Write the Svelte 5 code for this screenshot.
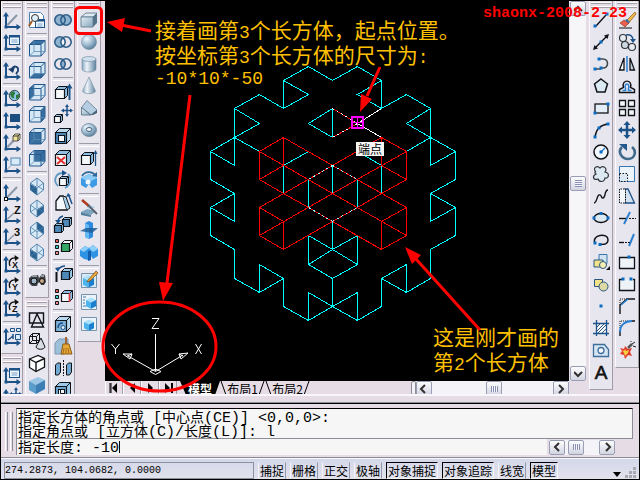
<script>
  const NAVY = '#1d5288';
  const INK = '#101418';

  // ---- icon building blocks (20 x 20 box) ----
  const axes =
    `<path d="M4 4v13h13" fill="none" stroke="${NAVY}" stroke-width="2"/>` +
    `<path d="M1 6.5 4 2l3 4.5zM14.500 14l4.500 3-4.500 3z" fill="${NAVY}"/>` +
    `<rect x="2.500" y="15.500" width="3" height="3" fill="${NAVY}"/>`;
  const diagonal = `<path d="M5.500 15 15 5" stroke="#8a97a8" stroke-width="2"/>`;
  const winBox = (x, y, w, h) =>
    `<rect x="${x}" y="${y}" width="${w}" height="${h}" fill="#eef6fd" stroke="${NAVY}"/>` +
    `<path d="M${x} ${y + 1}h${w}" stroke="${NAVY}" stroke-width="2"/>` +
    `<path d="M${x + 2} ${y + 4.5}h${w - 4}M${x + 2} ${y + 6.5}h${w - 4}" stroke="#7aa3c8"/>`;
  const letter = (c) =>
    `<text x="12" y="10" font-family="Liberation Sans, sans-serif" font-weight="700" font-size="11" fill="#111">${c}</text>`;
  const turn = (c) =>
    `<path d="M8 12C6 7 9 3 14 4" fill="none" stroke="#111" stroke-width="1.300"/><path d="M12.500 1 17 4l-4 3z" fill="#111"/>` +
    `<text x="10" y="14" font-family="Liberation Sans, sans-serif" font-weight="700" font-size="9" fill="#111">${c}</text>`;

  const faces = {
    top: 'M2.500 6.500 7 2.500h11l-4 4z',
    bottom: 'M2.500 18 7 13.500h11L14 18z',
    left: 'M2.500 6.500 7 2.500v11L2.500 18z',
    right: 'M14 6.500l4-4v11L14 18z',
    front: 'M2.500 6.500H14V18H2.500z',
    back: 'M7 2.500h11v11H7z'
  };
  const viewCube = (face) =>
    `<path d="M2.500 6.500 7 2.500h11v11L14 18H2.500z" fill="#d5e8f6"/>` +
    `<path d="${faces[face]}" fill="#39709f"/>` +
    `<path d="M2.500 6.500 7 2.500h11v11L14 18H2.500zM2.500 6.500H14V18M14 6.500l4-4" fill="none" stroke="#24588c"/>` +
    `<path d="M7 2.500v11h11M7 13.500 2.500 18" fill="none" stroke="#5d8bb2" stroke-width=".8"/>`;

  const isoFaces = {
    sw: 'M3.500 8v6l6.500 5v-7z',
    se: 'M16.500 8v6L10 19v-7z',
    ne: 'M10 2l6.500 5v7L10 9z',
    nw: 'M10 11v7l-6.500-4V8z'
  };
  const isoCube = (dir) =>
    `<path d="M10 2 16.500 7v7L10 19 3.500 14V7z" fill="#d7e9f6" stroke="#5685ad"/>` +
    `<path d="${isoFaces[dir]}" fill="#2a6291"/>` +
    `<path d="M3.500 7 10 12l6.500-5M10 12v7M3.500 14 10 9.500l6.500 4.500M10 2v7" fill="none" stroke="#4f80aa" stroke-width=".8"/>`;

  const rings = (fill) =>
    `${fill}<circle cx="7" cy="10" r="5.200" fill="none" stroke="#2e5d86" stroke-width="1.600"/>` +
    `<circle cx="13" cy="10" r="5.200" fill="none" stroke="#2e5d86" stroke-width="1.600"/>`;
  const lens = (c) => `<path d="M10 5.700a5.200 5.200 0 0 1 0 8.600 5.200 5.200 0 0 1 0-8.600z" fill="${c}"/>`;

  const solid = (x, y, s, front = '#f5f8fb', side = '#8fc0e4') => {
    const d = Math.round(s / 3);
    return (
      `<path d="M${x} ${y}l${d} ${-d}h${s}v${s}l${-d} ${d}z" fill="${side}" stroke="${INK}"/>` +
      `<path d="M${x} ${y}h${s}v${s}h${-s}z" fill="${front}" stroke="${INK}" stroke-width="1.200"/>` +
      `<path d="M${x + s} ${y}l${d} ${-d}" stroke="${INK}"/>`
    );
  };
  const blueBox = (x, y, s) => {
    const d = s / 2;
    return (
      `<path d="M${x} ${y}l${d} ${-d / 2} ${d} ${d / 2}-${d} ${d / 2}z" fill="#a9e0fb"/>` +
      `<path d="M${x} ${y}l${d} ${d / 2}v${s * 0.62}l-${d}-${d / 2}z" fill="#4db4ee"/>` +
      `<path d="M${x + s} ${y}l-${d} ${d / 2}v${s * 0.62}l${d}-${d / 2}z" fill="#1b7fd0"/>`
    );
  };
  const rgb =
    `<path d="M2.500 3.500h3v3h-3z" fill="#e45b4f" stroke="${INK}"/><path d="M2.500 9.500h3v3h-3z" fill="#3bd0c0" stroke="${INK}"/>` +
    `<path d="M2.500 15.500h3v3h-3z" fill="#f09090" stroke="${INK}"/>`;
  const knob = (x, y) => `<rect x="${x - 1.5}" y="${y - 1.5}" width="3" height="3" fill="#0b6cc4"/>`;
  const thin = (d, extra = '') => `<path d="${d}" fill="none" stroke="${INK}" ${extra || 'stroke-width="1.400"'}/>`;
  const blue = (d, width = 1.5) => `<path d="${d}" fill="none" stroke="#2a7fd0" stroke-width="${width}"/>`;

  const icons = {
    ucs: axes + diagonal,
    ucsNamed: axes + winBox(7.5, 3.5, 10, 9),
    ucsPrev: axes + `<path d="M10 9c1-4 7-3 6 2l-2 3" fill="none" stroke="#1a3f6c" stroke-width="1.800"/><path d="M6 9l7-2-2 6z" fill="#1a3f6c"/>`,
    ucsWorld: axes + `<circle cx="12.500" cy="7.500" r="5.200" fill="#8cc4e8" stroke="#3c4a50"/><path d="M8 6c2-4 5-3 5-1s-2 2-1 4-3 2-4-3zM14 7l3-1c1 3-1 5-3 5z" fill="#2c7a3c"/>`,
    ucsObject: axes + `<rect x="8" y="4" width="10" height="8" fill="#1c4d80"/>`,
    ucsFace: axes + diagonal + `<path d="M11 4l2-2h5v5l-2 2h-5z" fill="#efe39a" stroke="#555"/><path d="M16 4v5M11 4h5l2-2" stroke="#333" fill="none"/>`,
    ucsView: axes + `<rect x="9" y="4" width="9" height="7" fill="#d8ebf8" stroke="#4d84b4"/><path d="M5.500 15l3-3" stroke="#8a97a8"/>`,
    ucsOrigin: axes + diagonal + `<rect x="2.500" y="15.500" width="3" height="3" fill="#fff" stroke="#111"/>`,
    ucsZ: axes + `<path d="M5.500 15 12 9" stroke="#8a97a8" stroke-width="1.500"/>` + letter('Z'),
    ucs3: axes + `<path d="M5.500 15 12 9" stroke="#8a97a8" stroke-width="1.500"/>` + letter('3'),
    rotX: axes + turn('X'),
    rotY: axes + turn('Y'),
    rotZ: axes + turn('Z'),
    ucsApply: axes + `<path d="M8.500 2.500h4v3h-4zM14.500 2.500h4v3h-4zM13.500 8.500h5v5h-5z" fill="#dcebf8" stroke="${NAVY}"/><path d="M6 14l5-4M11 8v5" stroke="${NAVY}" stroke-width="1.500"/>`,
    ucsMove: axes + `<path d="M14 2v10M9 7h10" stroke="${NAVY}" stroke-width="1.500"/><path d="M14 0l2 3h-4zM14 14l2-3h-4zM7 7l3-2v4zM20 7l-3-2v4z" fill="${NAVY}"/>`,

    namedViews: `<path d="M2.500 2.500h11l3 3v12h-14z" fill="#fff" stroke="#4d84b4"/>` + winBox(8.5, 9.5, 9, 8) + `<circle cx="8" cy="8" r="3.500" fill="#dff0fb" stroke="#333"/><path d="M5 11l-3 5" stroke="#a05a20" stroke-width="2"/>`,
    vTop: viewCube('top'), vBottom: viewCube('bottom'), vLeft: viewCube('left'),
    vRight: viewCube('right'), vFront: viewCube('front'), vBack: viewCube('back'),
    sw: isoCube('sw'), se: isoCube('se'), ne: isoCube('ne'), nw: isoCube('nw'),
    camera: `<path d="M2 8l4-3h5l1 3 3-4 3 1 1 7-2 3h-3l-1-3-2 1-1 3H5l-3-3z" fill="#3c4248"/><circle cx="7" cy="11" r="3" fill="#9fb4c4" stroke="#111"/><circle cx="15" cy="11" r="2.500" fill="#c8a888" stroke="#111"/><path d="M5 6h5M14 6h3" stroke="#e8eef2"/>`,
    wire2d: thin('M2.500 4h14v10h-14zM10 5 4.500 18h12z'),
    wire3d: thin('M2.500 5.500l3-3h7v7l-3 3h-7zM2.500 5.500h7v7M9.500 5.500l3-3M5.500 2.500v7h7M5.500 9.500l-3 3', 'stroke-width="1"') + `<path d="M14 7l4 9c-1 3-8 3-9 0z" fill="#d8dde4" stroke="${INK}"/>`,
    hidden: `<path d="M2.500 6 11 2.500l6.500 3V14L9 18.500l-6.500-4z" fill="#fdfdfd" stroke="${INK}" stroke-width="1.300"/>` + thin('M2.500 6 9 9.500 17.500 5.500M9 9.500v9'),
    flat: `<path d="M2 6l9-4 7 3-9 5z" fill="#9cc6e6"/><path d="M2 6l7 4v9l-7-4z" fill="#5c9ccb"/><path d="M9 10l9-5v9l-9 5z" fill="#3d7fb4"/>`,

    union: rings('<circle cx="7" cy="10" r="5" fill="#8db3d0"/><circle cx="13" cy="10" r="5" fill="#8db3d0"/>' + lens('#8db3d0')),
    subtract: rings('<circle cx="7" cy="10" r="5" fill="#8db3d0"/>' + lens('#f3f6fa')),
    intersect: rings(lens('#8db3d0')),
    extrudeFace: solid(2.5, 7.5, 9) + `<path d="M16.500 5v13" stroke="${NAVY}" stroke-width="2"/><path d="M13.500 6.500l3-5 3 5z" fill="${NAVY}"/>`,
    moveFace: solid(1.500, 12.500, 6) + `<path d="M14 2v9M9.500 6.500h9" stroke="${NAVY}" stroke-width="1.500"/><path d="M14 0l2 3h-4zM14 13l2-3h-4zM8 6.500l3-2v4zM20 6.500l-3-2v4z" fill="${NAVY}"/>`,
    offsetFace: solid(2.5, 6.500, 11, '#4d88b8', '#b8d8ee') + `<rect x="5.500" y="9.500" width="6" height="6" fill="#f2f6fa" stroke="${INK}"/>`,
    deleteFace: solid(2.5, 6.500, 11) + `<path d="M4 9l8 7M12 9l-8 7" stroke="#e03030" stroke-width="2"/>`,
    rotateFace: solid(6.500, 8.500, 7) + `<path d="M5 16C0 11 2 3 10 3M15 4c4 4 3 11-3 14" fill="none" stroke="#5f9ac6" stroke-width="1.800"/><path d="M9 0l5 3-5 3z" fill="${NAVY}"/>`,
    taperFace: `<path d="M3 9l4-5h3l4 14H3z" fill="#f5f8fb" stroke="${INK}" stroke-width="1.300"/><path d="M10 4l3 1 4 11-3 2" fill="#a6cde8" stroke="${INK}"/><path d="M19 12l-3-8" stroke="${NAVY}" stroke-width="1.500"/><path d="M13 5l2-4 3 3z" fill="${NAVY}"/>`,
    copyFace: solid(9.500, 5.500, 7, '#4d88b8') + solid(1.500, 11.500, 7, '#4d88b8') + `<path d="M5 8c0-4 2-5 5-6" fill="none" stroke="${NAVY}" stroke-width="1.500"/><path d="M2 6h6l-3 4z" fill="${NAVY}"/>`,
    colorFace: rgb + solid(8.500, 7.500, 8, '#35a865', '#f4f6f8'),
    copyEdge: solid(8.500, 7.500, 8, '#4d88b8', '#9ccaea') + `<path d="M3.500 8v10" stroke="${INK}" stroke-width="2"/><path d="M5 6c2-3 4-4 7-4" fill="none" stroke="${NAVY}" stroke-width="1.500"/><path d="M2 4l5-1-2 5z" fill="${NAVY}"/>`,
    colorEdge: rgb + solid(8.500, 7.500, 8) + `<path d="M16.500 7v9" stroke="#e23838" stroke-width="1.500"/>`,
    imprint: solid(2.5, 6.500, 11, '#7fb2d8', '#b8d8ee') + `<path d="M5 14c0-3 2-5 5-5" fill="none" stroke="${NAVY}" stroke-width="1.500"/><circle cx="10" cy="13.500" r="2" fill="#e8f2fa" stroke="${NAVY}"/>`,
    clean: `<path d="M2 7l4-4h9v10l-4 5H2z" fill="#9cc0da" stroke="#7c98b0"/><path d="M13 1v8" stroke="#a8642c" stroke-width="2"/><path d="M10 8h6l3 10H8z" fill="#e8a838" stroke="#8a5a14"/><path d="M11 12l-1 6M13 12v6M15 12l1 6" stroke="#a8701c"/>`,
    separate: `<path d="M2.500 7l2-2h3v9l-2 3h-3zM13.500 7l2-2h3v9l-2 3h-3z" fill="#72a9d2" stroke="${INK}"/><path d="M10.500 2v16" stroke="${INK}" stroke-dasharray="2 1"/>`,
    shell: solid(2.5, 6.500, 11, '#6fa6cf', '#9ccaea') + `<rect x="5.500" y="9.500" width="6" height="6" fill="#f2f6fa" stroke="${INK}"/><path d="M5.500 15.500l2-2h4M7.500 13.500v-4" fill="none" stroke="${INK}"/>`,

    box: `<path d="M2 7l5-4h11l-4 4z" fill="#dfeaf2" stroke="#6d8798"/><path d="M2 7h12v10H2z" fill="url(#steel)" stroke="#6d8798"/><path d="M14 7l4-4v10l-4 4z" fill="#54738a"/>`,
    sphere: `<circle cx="10" cy="10" r="7.500" fill="url(#ball)" stroke="#6c8aa2" stroke-width=".6"/>`,
    cylinder: `<path d="M3 5v10c0 4 14 4 14 0V5z" fill="url(#tube)" stroke="#7189a0" stroke-width=".6"/><ellipse cx="10" cy="5" rx="7" ry="2.500" fill="#cfe0ec" stroke="#7189a0" stroke-width=".6"/>`,
    cone: `<path d="M10 1l6.500 14c-1 3.500-12 3.500-13 0z" fill="url(#tube)" stroke="#7189a0" stroke-width=".6"/>`,
    wedge: `<path d="M2.500 9.500 8 2.500 18 12l-6 5z" fill="#b4cde0" stroke="#5f7b92" stroke-width=".8"/><path d="M2.500 9.500 12 17H2.500z" fill="url(#steel)" stroke="#4f6b82" stroke-width=".8"/><path d="M12 17l6-5v3l-4 2z" fill="#3f5c74"/>`,
    torus: `<ellipse cx="10" cy="10" rx="7.500" ry="6.500" fill="url(#ball)" stroke="#607c92" stroke-width=".7"/><ellipse cx="10" cy="9.500" rx="2.800" ry="2" fill="#edf1f6" stroke="#3f6280"/>`,
    extrude: solid(2.5, 7.500, 9) + `<path d="M16.500 5v13" stroke="${NAVY}" stroke-width="1.300"/><path d="M14.500 6l2-4 2 4z" fill="${NAVY}"/>`,
    revolve: `<path d="M2 8l8-4 8 4v7l-5 3-3-4-3 4-5-3z" fill="#3d9be6"/><path d="M2 8l8-4 8 4-8 4z" fill="#8cccf6"/><circle cx="9" cy="12" r="2.500" fill="#f0f6fc"/><path d="M3 6c3-5 10-5 13-1" fill="none" stroke="#2d6a9c" stroke-width="1.600"/><path d="M18 2v5l-5-1z" fill="#2d6a9c"/>`,
    slice: `<path d="M2 14l6-3 9 2-5 4z" fill="#7ea4c0"/><path d="M2 14l10 3v2L2 17z" fill="#55809f"/><path d="M7 9l4-2 5 2-4 3z" fill="#b4cedf"/><path d="M3 2l7 6" stroke="#b03a20" stroke-width="2.500"/><path d="M9 7l9 9" stroke="#56606a" stroke-width="1.800"/>`,
    section: `<path d="M6 3l4-2 4 2v14l-4 2-4-2z" fill="#2d8ade"/><path d="M6 3l4 2v14l-4-2z" fill="#66b8f2"/><path d="M1 11l6-3h12l-6 5z" fill="#1c5f9c" opacity=".85"/>`,
    interfere: `<path d="M1 8l5-4 4 2 4-3 5 4v7l-5 3-2-3v-3l-3 1v6l-4-1-4-3z" fill="#2f93e4"/><path d="M1 8l5-4 4 2-5 4zM10 6l4-3 5 4-5 3z" fill="#8ed0f8"/><path d="M9 9h3v9l-3 1z" fill="#135fae"/>`,
    setDraw: `<path d="M2.500 3.500h15v14h-15z" fill="#d8e8f4" stroke="#7894ac"/>` + blueBox(4, 8, 11) + `<path d="M9 10 17 1l2 2-8 8-3 1z" fill="#e6a43a" stroke="#7a4a14" stroke-width=".7"/>`,
    setView: `<path d="M2.500 2.500h15v15h-15z" fill="#eaf3fa" stroke="#7894ac"/><path d="M4 5h3M4 8h2M4 11h2M4 14h3" stroke="#52779a"/>` + blueBox(7, 8, 10),
    setProf: `<path d="M2.500 3.500h15v13h-15z" fill="#eaf3fa" stroke="#7894ac"/>` + blueBox(5, 8, 10),

    line: thin('M5 16 15 5') + knob(4, 16) + knob(16, 4),
    xline: thin('M4 16 16 4') + `<path d="M2 18l1.500-5 3.500 3.500zM18 2l-1.500 5L13 3.500z" fill="${INK}"/>` + knob(10, 10),
    pline: `<path d="M4 15h6M8 5h4c6 0 6 9 0 9h-2" fill="none" stroke="#404850" stroke-width="1.600"/>` + knob(4, 15) + knob(10, 14) + knob(8, 5),
    polygon: `<path d="M10 3l6.500 5L14 16H6L3.500 8z" fill="#dbe9f3" stroke="${INK}" stroke-width="1.500"/>`,
    rect: `<rect x="4" y="6" width="13" height="9" fill="#e4eef6" stroke="${INK}" stroke-width="1.300"/>` + knob(4, 15) + knob(17, 6),
    arc: thin('M4 17C5 9 9 5 17 4') + knob(4, 17) + knob(8, 8) + knob(17, 4),
    circle: `<circle cx="10" cy="10" r="7" fill="#f3f7fb" stroke="${INK}" stroke-width="1.500"/>` + blue('M10 10l4-4') + knob(10, 10),
    cloud: `<path d="M5 8C1 4 6 1 9 4c3-3 8 0 5 4 5 1 4 7 0 6-1 5-6 4-7 1-5 2-6-3-2-5-2-1-1-3 0-2z" fill="#dce8f2" stroke="#30363c" stroke-width="1.200"/>`,
    spline: thin('M3 17c3 0 3-8 5-8 3-1 2 4 4 3 3 0 1-8 5-8'),
    ellipse: `<ellipse cx="10" cy="10" rx="7" ry="4.500" fill="#dce8f2" stroke="${INK}" stroke-width="1.400"/>` + knob(3, 10) + knob(17, 10) + knob(10, 5.5),
    earc: thin('M4 13C0 5 17 2 17 10c0 4-4 5-8 4') + knob(4, 13) + knob(9, 14.500),
    insert: `<path d="M8 2.500h8v9h-8z" fill="#cfe3f4" stroke="#3a76ac"/><path d="M3 8h9v7H3z" fill="#f2e28a" stroke="#2a5580"/><circle cx="12" cy="13" r="3.500" fill="#f6efb0" stroke="#2a5580"/><path d="M15 18l4-4v4z" fill="#111"/>`,
    block: `<path d="M3.500 5.500h8v7h-8z" fill="#f2e28a" stroke="#2a5580"/><circle cx="12.500" cy="12.500" r="4.500" fill="#ddd9a4" stroke="#2a5580"/>`,
    point: knob(10, 10),
    hatch: `<path d="M6 6h9v9H6z" fill="#f6f8fb"/><path d="M6 9l3-3M6 13l7-7M7 15l8-8M11 15l4-4" stroke="#2a5580"/>` + `<path d="M2 5.500h16M2 15.500h16M5.500 2v16M15.500 2v16" stroke="${NAVY}" stroke-width="1.300"/>`,
    region: `<path d="M2.500 4.500h11l4 5v7h-15z" fill="#d5e5f2" stroke="#3e6f9c" stroke-width="1.300"/><circle cx="10" cy="10.500" r="3" fill="#f6f8fb" stroke="#3e6f9c" stroke-width="1.300"/>`,
    text: `<text x="10" y="17" text-anchor="middle" font-family="Liberation Sans, sans-serif" font-size="19" fill="#111" stroke="#111" stroke-width=".6">A</text>`,

    erase: `<path d="M18 2 8 12l3 2L19 4z" fill="#f0b848" stroke="#8a5a14" stroke-width=".7"/><path d="M3 13l4-3 5 3-4 4z" fill="#e8604c" stroke="#8a2a1c" stroke-width=".6"/><path d="M8 10l2-1 3 3-2 1z" fill="#2f6cac"/><path d="M2 18h13" stroke="#111"/>`,
    copy: `<circle cx="6" cy="6" r="3.500" fill="#e6ebf0" stroke="#30363c" stroke-width="1.200"/><circle cx="8" cy="13" r="3.500" fill="#cdd8e2" stroke="#30363c" stroke-width="1.200"/><circle cx="15" cy="15" r="3.500" fill="#e6ebf0" stroke="#30363c" stroke-width="1.200"/><path d="M9 3c5-1 7 2 7 5" fill="none" stroke="${NAVY}" stroke-width="1.500"/><path d="M13 7h6l-3 4z" fill="${NAVY}"/>`,
    mirror: `<path d="M7 4v12H2.500z" fill="#fff" stroke="${INK}" stroke-width="1.300"/><path d="M13 4v12h4.500z" fill="#c8d6e2" stroke="${INK}" stroke-width="1.300"/>` + blue('M10 2v16'),
    offset: thin('M2.500 16.500v-3l4-2C4 3 16 3 13.500 11.500l4 2v3z') + blue('M5.500 14.500h3v-2c-2-6 5-6 3 0v2h3'),
    array: `<path d="M2.500 2.500h6v6h-6zM11.500 2.500h6v6h-6zM2.500 11.500h6v6h-6zM11.500 11.500h6v6h-6z" fill="#f4f7fa" stroke="${INK}" stroke-width="1.300"/>`,
    move: `<path d="M10 3v14M3 10h14" stroke="${NAVY}" stroke-width="2.500"/><path d="M10 1l3.500 4h-7zM10 19l3.500-4h-7zM1 10l4-3.500v7zM19 10l-4-3.500v7z" fill="${NAVY}"/>`,
    rotate: `<path d="M5 5c-5 5 0 12 6 12 7 0 9-8 4-12" fill="none" stroke="#406a8c" stroke-width="2.600"/><path d="M2 2h8v7z" fill="#24588c"/>`,
    scale: `<path d="M2.500 2.500h15v15h-15z" fill="#eef5fa" stroke="#3477b4"/><path d="M2.500 9.500h8v8h-8z" fill="#dce8f2" stroke="${INK}" stroke-dasharray="1.500 1.500"/>`,
    stretch: `<path d="M8 3h3l6.500 14H8z" fill="#d2e2ef" stroke="#1d4f86" stroke-width="1.300"/><path d="M2.500 3v14h6V3z" fill="#f4f7fa" stroke="${INK}" stroke-dasharray="1.500 1"/>`,
    trim: blue('M7 16l6-12', 2) + thin('M2 10.500h7') + thin('M12 10.500h7', 'stroke-dasharray="2 1"'),
    extend: blue('M12 16l5-12', 2) + thin('M2 12.500h5') + thin('M8 12.500h6', 'stroke-dasharray="2 1"'),
    breakPt: `<path d="M2.500 5.500h15v11h-15z" fill="#eef3f8" stroke="${INK}" stroke-width="1.300"/>` + knob(12, 5),
    break: `<path d="M5 5.500H2.500v11h15v-11H16" fill="#eef3f8" stroke="${INK}" stroke-width="1.300"/>` + knob(6, 5) + knob(14, 5),
    chamfer: thin('M3 18v-9l7-6h8') + thin('M3 9V3h7', 'stroke-dasharray="1 1"') + blue('M4 9l7-6'),
    fillet: thin('M3 18v-6M14 3h4') + thin('M3 10V3h9', 'stroke-dasharray="1 1"') + `<path d="M3 14C3 7 8 3 15 3" fill="none" stroke="#2a7fd0" stroke-width="2"/>`,
    explode: `<path d="M3 8l4 1 1-3 3 3 4-1-2 4 2 4-4-1-3 4-1-4-4-1 2-3z" fill="#e03a2a"/><path d="M5 10l2 1 1-2 1 2 3-1-1 3-3 3-1-3z" fill="#f8d040"/><path d="M11 8l4-4" stroke="#555" stroke-width="2.500"/><path d="M15 4l3-2M16 6l3 1M14 2V1" stroke="#222"/>`
  };

  const sep = '|';
  const leftDock = [
    [
      ['ucs', 'ucsNamed', sep, 'ucsPrev', sep, 'ucsWorld', 'ucsObject', 'ucsFace', 'ucsView', sep, 'ucsOrigin', 'ucsZ', 'ucs3', sep, 'rotX', 'rotY', 'rotZ', sep, 'ucsApply'],
      ['ucsNamed', 'ucsMove']
    ],
    [
      ['namedViews', sep, 'vTop', 'vBottom', 'vLeft', 'vRight', 'vFront', 'vBack', sep, 'sw', 'se', 'ne', 'nw', sep, 'camera'],
      ['wire2d', 'wire3d', 'hidden', 'flat']
    ],
    [
      ['union', 'subtract', 'intersect', sep, 'extrudeFace', 'moveFace', 'offsetFace', 'deleteFace', 'rotateFace', 'taperFace', 'copyFace', 'colorFace', sep, 'copyEdge', 'colorEdge', sep, 'imprint', 'clean', 'separate', 'shell']
    ],
    [
      ['box', 'sphere', 'cylinder', 'cone', 'wedge', 'torus', sep, 'extrude', 'revolve', sep, 'slice', 'section', 'interfere', sep, 'setDraw', 'setView', 'setProf']
    ]
  ];
  const rightDock = [
    [['line', 'xline', 'pline', 'polygon', 'rect', 'arc', 'circle', 'cloud', 'spline', 'ellipse', 'earc', 'insert', 'block', 'point', 'hatch', 'region', 'text']],
    [['erase', 'copy', 'mirror', 'offset', 'array', 'move', 'rotate', 'scale', 'stretch', 'trim', 'extend', 'breakPt', 'break', 'chamfer', 'fillet', 'explode']]
  ];

  // ---- isometric model: i counts half cells across, j half cells down ----
  const at = ([i, j]) => `${Math.round(332 + 24.5 * i) + 0.5} ${Math.round(193 + 14.1 * j) + 0.5}`;
  const toPath = (runs) => runs.map((r) => 'M' + r.map(at).join('L')).join('');
  const both = (runs) => toPath([...runs, ...runs.map((r) => r.map(([i, j]) => [-i, j]))]);

  const cyan = both([
    [[0, -8], [-1, -9], [-2, -8], [-2, -6], [-3, -7], [-4, -6], [-4, -2], [-5, -3], [-5, -1], [-4, 0], [-4, 2], [-5, 1], [-5, 3], [-4, 4], [-4, 6], [-3, 7], [-2, 6], [-2, 8], [-1, 9], [0, 8], [0, 6], [-1, 5], [-1, 3], [0, 4], [0, 2]],
    [[-2, -8], [-1, -7], [-2, -6]],
    [[-4, -6], [-3, -5], [-4, -4]],
    [[-5, -3], [-4, -4], [-3, -3]],
    [[-4, 0], [-5, 1]],
    [[-3, 7], [-3, 5], [-2, 6]],
    [[-1, 9], [-1, 7], [0, 8]],
    [[-1, 5], [0, 4]],
    [[-1, -3], [-2, -2], [-2, 0]],
    [[-1, -1], [-1, 1]],
    [[0, -2], [0, 0]]
  ]);
  const cyanLeft = toPath([[[0, -4], [0, -6], [-1, -5], [0, -4]]]);
  const red = both([
    [[0, 0], [-3, -3], [-2, -4], [0, -2], [-3, 1], [-3, 3], [-2, 4], [0, 2]],
    [[-3, -3], [-3, -1], [-2, -2], [-2, -4]],
    [[-3, -1], [-2, 0], [-1, 1], [0, 2]],
    [[0, 0], [-3, 3]],
    [[-3, 1], [-2, 2], [-2, 4]]
  ]);
  const dotted = both([[[0, -2], [-1, -1]], [[0, 2], [-1, 1]]]);
  const snapRed = toPath([[[0, -6], [1, -5], [0, -4]]]);
  const snapWhite = toPath([[[2, -6], [1, -5], [2, -4]]]);

  const modes = [
    ['捕捉', false], ['栅格', false], ['正交', false], ['极轴', false],
    ['对象捕捉', true], ['对象追踪', true], ['线宽', false], ['模型', true]
  ];
  const notes = [
    ['first', ['接着画第3个长方体，起点位置。', '按坐标第3个长方体的尺寸为:', '-10*10*-50']],
    ['second', ['这是刚才画的', '第2个长方体']]
  ];
  const history = ['指定长方体的角点或 [中心点(CE)] <0,0,0>:', '指定角点或 [立方体(C)/长度(L)]: l'];

  // Latin runs are set in the half-width face, everything else in the full-width one
  const split = (s) => s.match(/[\x20-\x7e]+|[^\x20-\x7e]+/g).map((t) => ({ t, half: /^[\x20-\x7e]/.test(t) }));
  let command = $state('-10');
</script>

{#snippet mixed(s)}{#each split(s) as run}<span class:half={run.half}>{run.t}</span>{/each}{/snippet}

{#snippet dock(columns)}
  {#each columns as column}
    <div class="column">
      {#each column as bar}
        <div class="toolbar" role="toolbar">
          <div class="grip"><i></i><i></i></div>
          {#each bar as item}
            {#if item === sep}
              <div class="sep"></div>
            {:else}
              <button class="tool" aria-label={item}>
                <svg width="20" height="20" viewBox="0 0 20 20">{@html icons[item]}</svg>
              </button>
            {/if}
          {/each}
        </div>
      {/each}
    </div>
  {/each}
{/snippet}

{#snippet arrow(d)}
  <svg width="9" height="10" viewBox="0 0 9 10"><path {d} fill="none" stroke="#303030" stroke-width="2" /></svg>
{/snippet}

<div class="shell">
  <main class="workspace">
    <div class="dock left">{@render dock(leftDock)}</div>

    <section class="center">
      <div class="canvas">
        <svg class="model" width="464" height="381" viewBox="105 1 464 381" fill="none" shape-rendering="crispEdges">
          <path d={cyan} stroke="#00ffff" />
          <path d={cyanLeft} stroke="#00ffff" />
          <path d={red} stroke="#ff0000" />
          <path d={dotted} stroke="#a0ffff" stroke-dasharray="2 3" />
          <path d={snapRed} stroke="#ff0000" />
          <path d={snapRed} stroke="#ffffff" stroke-dasharray="2 3" />
          <path d={snapWhite} stroke="#ffffff" />
          <path d="M352 117h11v11h-11z" stroke="#ff00ff" stroke-width="2" />
          <path d="M353 122.500h10M357.500 118v10" stroke="#ff00ff" />
          <g stroke="#fff" shape-rendering="auto">
            <path d="M155.500 334v37M155.500 371.500 183 355M155.500 371.500 128 356M150 371.500l5.500-2.500 5.500 2.500-5.500 3zM188 353l-9 1 2 5zM179 354l4 2M123 354l9 0-2 5zM132 354l-5 2" />
            <path d="M152 318.500h7l-7 10h7M111.500 344l4 5 4-5M115.500 349v5M195.500 344l6 10M201.500 344l-6 10" />
          </g>
        </svg>
        {#each notes as [place, lines]}
          <div class="note {place}">
            {#each lines as line}<div class="noteline">{@render mixed(line)}</div>{/each}
          </div>
        {/each}
        <span class="snaptip">端点</span>
      </div>
      <div class="tabs">
        <button class="nav" aria-label="first"><svg width="12" height="10"><path d="M2 0v10M3 0v10" stroke="#000" /><path d="M9 0v10L4 5z" /></svg></button>
        <button class="nav" aria-label="previous"><svg width="12" height="10"><path d="M9 0v10L4 5z" /></svg></button>
        <button class="nav" aria-label="next"><svg width="12" height="10"><path d="M4 0v10l5-5z" /></svg></button>
        <button class="nav" aria-label="last"><svg width="12" height="10"><path d="M3 0v10l5-5z" /><path d="M10 0v10" stroke="#000" stroke-width="2" /></svg></button>
        <button class="tab on"><svg width="40" height="15" viewBox="0 0 40 15"><path d="M0 0h40l-5 14H6z" fill="#000" /></svg><span>模型</span></button>
        <button class="tab"><svg width="45" height="15" viewBox="0 0 45 15"><path d="M1 0l5 14h33l5-14" fill="none" stroke="#000" /></svg><span>布局1</span></button>
        <button class="tab"><svg width="45" height="15" viewBox="0 0 45 15"><path d="M1 0l5 14h33l5-14" fill="none" stroke="#000" /></svg><span>布局2</span></button>
        <div class="splitter"></div>
        <div class="hscroll">
          <button class="sb" aria-label="scroll left">{@render arrow('M6 1 2 5l4 4')}</button>
          <button class="sb thumb" aria-label="horizontal position"><i class="ridges"></i></button>
          <button class="sb" aria-label="scroll right">{@render arrow('M3 1l4 4-4 4')}</button>
        </div>
      </div>
    </section>

    <div class="vscroll">
      <button class="sb" aria-label="scroll up">{@render arrow('M0 7l4-4 4 4')}</button>
      <button class="sb thumb" aria-label="vertical position"><i class="ridges flat"></i></button>
      <button class="sb" aria-label="scroll down">{@render arrow('M0 3l4 4 4-4')}</button>
    </div>

    <div class="dock right">{@render dock(rightDock)}</div>

    <svg class="marks" width="640" height="404" viewBox="0 0 640 404">
      <defs>
        <linearGradient id="steel" x1="0" y1="0" x2="1" y2="1"><stop offset="0" stop-color="#e4eef5" /><stop offset="1" stop-color="#85a6bd" /></linearGradient>
        <linearGradient id="tube"><stop offset="0" stop-color="#88a8c2" /><stop offset=".35" stop-color="#eef5fa" /><stop offset="1" stop-color="#5f829e" /></linearGradient>
        <radialGradient id="ball" cx=".35" cy=".3" r=".75"><stop offset="0" stop-color="#f2f8fc" /><stop offset=".5" stop-color="#a3bfd3" /><stop offset="1" stop-color="#587c98" /></radialGradient>
      </defs>
      <g fill="none" stroke="#ff0000" stroke-width="3">
        <rect x="75.500" y="7.500" width="26" height="26" rx="4" />
        <ellipse cx="159.500" cy="346.500" rx="56.500" ry="44.500" />
        <path d="M151 31l-30-6M380 67l-13 29M190 95l-23 188M480 330l-64-71" />
      </g>
      <path d="M107 22l18-4-3 14zM360 112l1-18 11 5zM163 301l-4-19 14 1zM405 247l16 8-9 9z" fill="#ff0000" />
    </svg>
    <span class="stamp">shaonx-2008-2-23</span>
  </main>

  <section class="command">
    <div class="handle"><i></i><i></i></div>
    <div class="console">
      <div class="log">
        {#each history as row}<div class="row">{@render mixed(row)}</div>{/each}
      </div>
      <div class="entry">
        <label class="row" for="cmd">{@render mixed('指定长度: ')}</label>
        <input id="cmd" bind:value={command} />
        <span class="caret"></span>
        <div class="hscroll mini">
          <button class="sb" aria-label="command scroll left">{@render arrow('M6 1 2 5l4 4')}</button>
          <button class="sb thumb" aria-label="command position"><i class="ridges"></i></button>
          <button class="sb" aria-label="command scroll right">{@render arrow('M3 1l4 4-4 4')}</button>
        </div>
      </div>
    </div>
  </section>

  <footer class="status">
    <output class="coords">274.2873, 104.0682, 0.0000</output>
    {#each modes as [name, on]}<button class="mode" class:on aria-pressed={on}>{name}</button>{/each}
    <button class="more" aria-label="status menu"><svg width="8" height="5"><path d="M0 0h8L4 5z" /></svg></button>
    <svg class="corner" width="12" height="12"><path d="M8 1h3v3H8zM8 5h3v3H8zM4 5h3v3H4zM8 9h3v3H8zM4 9h3v3H4zM0 9h3v3H0z" fill="#a8a8b0" /></svg>
  </footer>
</div>

<style>
  :global(body) { margin: 0; background: #000; }
  * { box-sizing: border-box; }
  button { margin: 0; padding: 0; border: 0; background: none; color: #000; font: inherit; }
  svg { display: block; }
  i { display: block; }

  .shell {
    display: flex;
    flex-direction: column;
    height: 100vh;
    border: 1px solid #000;
    background: #e6dce5;
    overflow: hidden;
    font: 12px/14px "Noto Sans CJK SC", "Liberation Sans", sans-serif;
  }
  .workspace {
    position: relative;
    display: flex;
    flex: 1;
    min-height: 0;
    padding-bottom: 6px;
  }
  .workspace::after {
    content: "";
    position: absolute;
    inset: auto 0 0;
    height: 6px;
    border-top: 2px solid #f8f6fa;
    border-bottom: 1px solid #8c8c98;
    background: #e6dce5;
  }

  .dock { display: flex; gap: 2px; overflow: hidden; }
  .dock.left { padding-right: 4px; }
  .column { display: flex; flex-direction: column; gap: 2px; width: 24px; flex: none; }
  .dock.left .column:first-child { width: 22px; }
  .toolbar {
    padding-bottom: 6px;
    border-right: 1px solid #a09ca8;
    border-bottom: 1px solid #a09ca8;
    border-left: 1px solid #fbfafc;
    background: #e7e6ee;
  }
  .grip { display: grid; align-content: start; gap: 2px; height: 8px; padding: 1px 1px 0; background: #e6dce5; }
  .grip i { height: 2px; border-top: 1px solid #fff; border-bottom: 1px solid #a09ca8; }
  .tool { display: flex; width: 100%; height: 22px; align-items: center; justify-content: center; }
  .tool svg { flex: none; }
  .sep { height: 6px; padding: 2px 1px; }
  .sep::before { content: ""; display: block; height: 2px; border-top: 1px solid #9c9ca8; border-bottom: 1px solid #fff; }

  .center { display: flex; flex: 1; flex-direction: column; min-width: 0; }
  .canvas { position: relative; flex: 1; min-height: 0; overflow: hidden; background: #000; }
  .note { position: absolute; color: #ffc000; font-size: 21px; white-space: pre; }
  .noteline { display: flex; height: 25px; align-items: baseline; line-height: 25px; }
  .note .half { font-family: "Liberation Mono", monospace; font-size: 18px; }
  .first { left: 50px; top: 16px; }
  .second { left: 328px; top: 323px; }
  .snaptip {
    position: absolute;
    left: 251px;
    top: 141px;
    padding: 0 2px;
    background: #f6f6f6;
    color: #000;
  }

  .tabs { display: flex; height: 16px; align-items: flex-start; background: #e6dce5; }
  .nav { display: grid; width: 18px; height: 15px; place-items: center; border-right: 1px solid #a09ca8; border-bottom: 1px solid #a09ca8; border-left: 1px solid #fff; }
  .tab { position: relative; width: 45px; height: 15px; text-align: center; }
  .tab.on { width: 40px; margin-left: 3px; color: #fff; font-weight: 700; }
  .tab svg { position: absolute; inset: 0; }
  .tab span { position: relative; }
  .splitter { width: 5px; height: 14px; margin-left: auto; border: 1px solid #8c8c98; border-radius: 2px; background: #f4f2f6; }
  .hscroll { display: flex; justify-content: space-between; width: 33%; height: 15px; background: #f4f4f8; }
  .tabs .thumb { margin-left: 4px; }
  .sb {
    display: grid;
    flex: none;
    width: 16px;
    height: 15px;
    place-items: center;
    border: 1px solid #9a9eb4;
    border-radius: 2px;
    background: linear-gradient(#fdfdfe, #d2d4e0);
  }
  .ridges { width: 7px; height: 6px; background: repeating-linear-gradient(90deg, #8890b4 0 1px, #f4f4fa 1px 2px); }
  .ridges.flat { height: 7px; background: repeating-linear-gradient(#8890b4 0 1px, #f4f4fa 1px 2px); }
  .vscroll {
    display: flex;
    flex-direction: column;
    justify-content: space-between;
    width: 17px;
    margin: 0 3px 16px 0;
    background: #f6f5f8;
    border-left: 1px solid #e6dce5;
  }
  .vscroll .thumb { margin-bottom: 16px; }

  .marks { position: absolute; left: -1px; top: -1px; z-index: 2; pointer-events: none; }
  .stamp {
    position: absolute;
    left: 482px;
    top: 5px;
    z-index: 3;
    color: #ff0000;
    font: 700 15px/16px "Liberation Mono", monospace;
  }

  .command { display: flex; padding: 4px 6px 2px 4px; border-top: 1px solid #000; border-bottom: 1px solid #8c8c98; }
  .handle { display: flex; gap: 2px; width: 11px; padding: 4px 0; }
  .handle i { width: 3px; border-right: 1px solid #8c8c98; border-left: 1px solid #fff; }
  .console { flex: 1; min-width: 0; }
  .log { height: 31px; border: solid #8c8c98; border-width: 0 1px 1px; border-top: 1px solid #000; background: #f6f6f6; }
  .row { display: flex; height: 14px; align-items: baseline; padding-left: 1px; font-size: 14px; line-height: 14px; white-space: pre; }
  .row .half, input { font-family: "Liberation Mono", monospace; font-size: 15px; }
  .entry { display: flex; height: 16px; align-items: baseline; padding-right: 18px; border-left: 1px solid #8c8c98; background: linear-gradient(90deg, #f6f6f6 calc(100% - 86px), #e6dce5 0); }
  input {
    width: 27px;
    height: 14px;
    padding: 0;
    border: 0;
    outline: 0;
    background: none;
    color: #000;
    line-height: 14px;
  }
  .caret { align-self: center; width: 1px; height: 12px; background: #000; }
  .mini { width: 66px; margin-left: auto; align-self: center; }
  .mini .thumb { margin-right: 12px; }

  .status {
    display: flex;
    align-items: flex-start;
    height: 21px;
    padding: 3px 2px 0 3px;
    gap: 4px;
    border-top: 1px solid #f8f8fa;
    background: linear-gradient(#d4d8ea, #e2e2ec);
  }
  .coords {
    width: 250px;
    height: 17px;
    border: 1px solid #8c90a0;
    font: 10px/16px "Liberation Mono", monospace;
  }
  .mode {
    height: 17px;
    padding: 0 1px;
    border: 1px solid transparent;
    border-right-color: #9498a8;
    border-left-color: #f6f6fa;
    line-height: 16px;
    white-space: nowrap;
  }
  .mode.on { border-color: #000 #f6f6fa #f6f6fa #000; }
  .more { margin: 10px 0 0 auto; }
  .corner { margin-top: 4px; }
</style>
